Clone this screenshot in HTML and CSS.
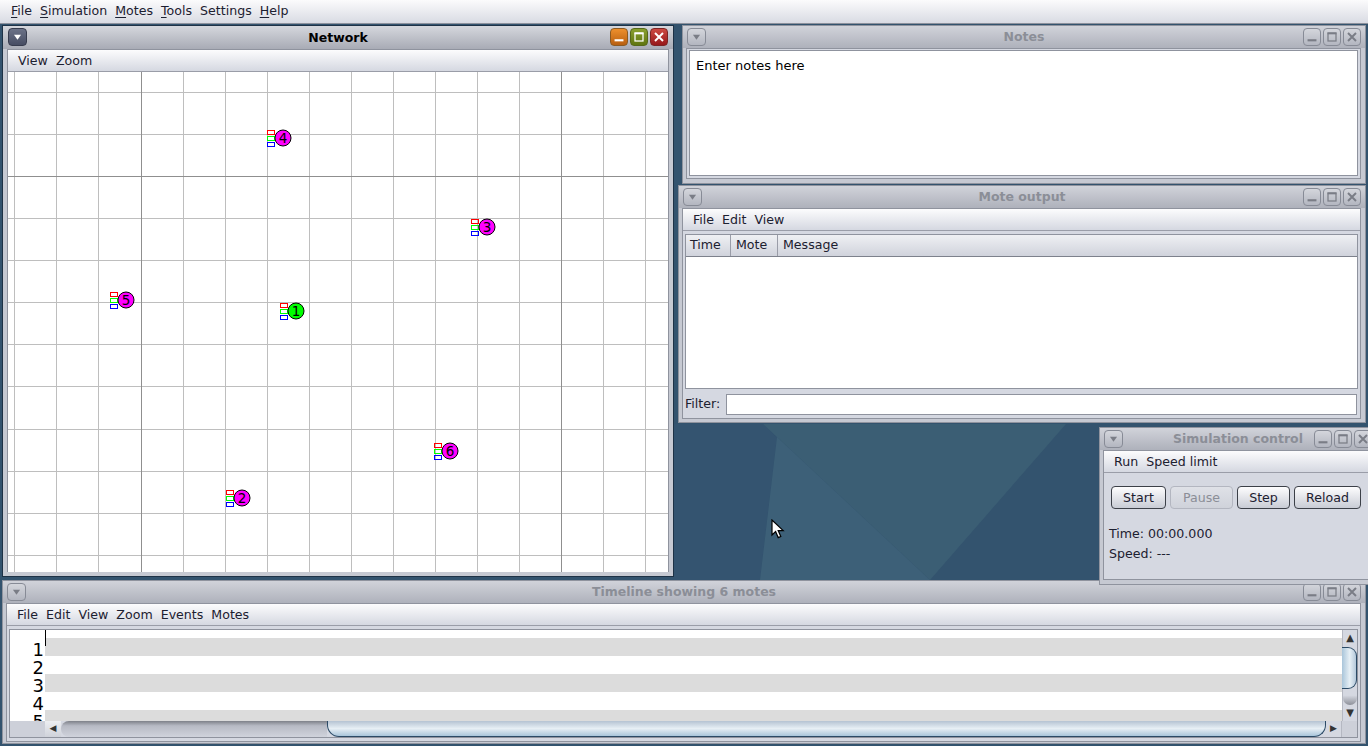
FILE: index.html
```html
<!DOCTYPE html>
<html lang="en">
<head>
<meta charset="utf-8">
<title>Cooja: The Contiki Network Simulator</title>
<link rel="stylesheet" href="styles.css">
</head>
<body>
<svg class="defs" width="0" height="0" aria-hidden="true">
  <symbol id="i-menu" viewBox="0 0 19 18"><path d="M5.5 6.5h8L9.5 12z" fill="currentColor"/></symbol>
  <symbol id="i-min" viewBox="0 0 18 18"><rect x="4" y="11.5" width="10" height="2.4" fill="currentColor"/></symbol>
  <symbol id="i-max" viewBox="0 0 18 18"><rect x="4.5" y="4.5" width="9" height="9" fill="none" stroke="currentColor" stroke-width="1.4"/><rect x="4" y="4" width="10" height="2" fill="currentColor"/></symbol>
  <symbol id="i-close" viewBox="0 0 18 18"><path d="M4.5 4.5l9 9M13.5 4.5l-9 9" fill="none" stroke="currentColor" stroke-width="2.2"/></symbol>
  <g id="leds">
    <rect x="-16" y="-8" width="7" height="4" fill="none" stroke="#f00"/>
    <rect x="-16" y="-2" width="7" height="4" fill="none" stroke="#0f0"/>
    <rect x="-16" y="4" width="7" height="4" fill="none" stroke="#00f"/>
  </g>
</svg>

<header class="appbar">
  <span class="mi"><u>F</u>ile</span><span class="mi"><u>S</u>imulation</span><span class="mi"><u>M</u>otes</span><span class="mi"><u>T</u>ools</span><span class="mi">Settings</span><span class="mi"><u>H</u>elp</span>
</header>

<main class="desktop">
  <svg class="wallpaper" width="1368" height="722" viewBox="0 24 1368 722" aria-hidden="true">
    <rect x="0" y="24" width="1368" height="722" fill="#33536e"/>
    <polygon points="674,424 763,424 777,437 760,580 674,580" fill="#345470"/>
    <polygon points="763,424 1066,424 930,580" fill="#3b5e74"/>
    <polygon points="777,437 930,580 760,580" fill="#3d6078"/>
  </svg>

  <section class="win w-timeline">
    <div class="title">
      <button class="tb menu"><svg><use href="#i-menu"/></svg></button>
      <h2>Timeline showing 6 motes</h2>
      <button class="tb"><svg><use href="#i-min"/></svg></button><button class="tb"><svg><use href="#i-max"/></svg></button><button class="tb"><svg><use href="#i-close"/></svg></button>
    </div>
    <div class="inner">
      <nav class="menubar"><span class="mi">File</span><span class="mi">Edit</span><span class="mi">View</span><span class="mi">Zoom</span><span class="mi">Events</span><span class="mi">Motes</span></nav>
      <div class="tl-frame">
        <div class="tl-view">
          <div class="tl-gutter"><span>1</span><span>2</span><span>3</span><span>4</span><span>5</span></div>
          <div class="tl-rows"><i class="tick"></i><div class="row"></div><div class="row"></div><div class="row"></div><div class="row"></div><div class="row"></div></div>
          <div class="vscroll">
            <span class="arrow">▲</span>
            <div class="vthumb"></div>
            <div class="vshadow"></div>
            <span class="arrow">▼</span>
          </div>
        </div>
        <div class="hscroll">
          <div class="hcorner"></div>
          <span class="harrow">◀</span>
          <div class="htrack"></div>
          <div class="hthumb"></div>
          <span class="harrow right">▶</span>
          <div class="hend"></div>
        </div>
      </div>
    </div>
  </section>

  <section class="win w-network active">
    <div class="title">
      <button class="tb menu"><svg><use href="#i-menu"/></svg></button>
      <h2>Network</h2>
      <button class="tb c-min"><svg><use href="#i-min"/></svg></button><button class="tb c-max"><svg><use href="#i-max"/></svg></button><button class="tb c-close"><svg><use href="#i-close"/></svg></button>
    </div>
    <div class="inner">
      <nav class="menubar"><span class="mi">View</span><span class="mi">Zoom</span></nav>
      <svg class="canvas" width="660" height="500" viewBox="8 72 660 500">
        <rect x="8" y="72" width="660" height="500" fill="#fff"/>
        <g class="grid">
          <path d="M14.5 72v500M56.5 72v500M98.5 72v500M183.5 72v500M225.5 72v500M267.5 72v500M309.5 72v500M351.5 72v500M393.5 72v500M435.5 72v500M477.5 72v500M519.5 72v500M603.5 72v500M645.5 72v500"/>
          <path d="M8 92.5h660M8 134.5h660M8 218.5h660M8 260.5h660M8 302.5h660M8 344.5h660M8 386.5h660M8 429.5h660M8 471.5h660M8 513.5h660M8 555.5h660"/>
          <path class="major" d="M141.5 72v500M561.5 72v500M8 176.5h660"/>
        </g>
        <g class="mote" transform="translate(283 138)"><use href="#leds" x="0.5" y="0.5"/><circle r="8" fill="#f0f"/><text y="5">4</text></g>
        <g class="mote" transform="translate(487 227)"><use href="#leds" x="0.5" y="0.5"/><circle r="8" fill="#f0f"/><text y="5">3</text></g>
        <g class="mote" transform="translate(126 300)"><use href="#leds" x="0.5" y="0.5"/><circle r="8" fill="#f0f"/><text y="5">5</text></g>
        <g class="mote" transform="translate(296 311)"><use href="#leds" x="0.5" y="0.5"/><circle r="8" fill="#0f0"/><text y="5">1</text></g>
        <g class="mote" transform="translate(450 451)"><use href="#leds" x="0.5" y="0.5"/><circle r="8" fill="#f0f"/><text y="5">6</text></g>
        <g class="mote" transform="translate(242 498)"><use href="#leds" x="0.5" y="0.5"/><circle r="8" fill="#f0f"/><text y="5">2</text></g>
      </svg>
    </div>
  </section>

  <section class="win w-notes">
    <div class="title">
      <button class="tb menu"><svg><use href="#i-menu"/></svg></button>
      <h2>Notes</h2>
      <button class="tb"><svg><use href="#i-min"/></svg></button><button class="tb"><svg><use href="#i-max"/></svg></button><button class="tb"><svg><use href="#i-close"/></svg></button>
    </div>
    <div class="inner pad-notes">
      <div class="notes">Enter notes here</div>
    </div>
  </section>

  <section class="win w-output">
    <div class="title">
      <button class="tb menu"><svg><use href="#i-menu"/></svg></button>
      <h2>Mote output</h2>
      <button class="tb"><svg><use href="#i-min"/></svg></button><button class="tb"><svg><use href="#i-max"/></svg></button><button class="tb"><svg><use href="#i-close"/></svg></button>
    </div>
    <div class="inner">
      <nav class="menubar"><span class="mi">File</span><span class="mi">Edit</span><span class="mi">View</span></nav>
      <div class="output-body">
        <div class="table">
          <div class="thead"><span class="th th-time">Time</span><span class="th th-mote">Mote</span><span class="th th-msg">Message</span></div>
          <div class="tbody"></div>
        </div>
        <div class="filter"><label>Filter:</label><div class="field"></div></div>
      </div>
    </div>
  </section>

  <section class="win w-sim">
    <div class="title">
      <button class="tb menu"><svg><use href="#i-menu"/></svg></button>
      <h2>Simulation control</h2>
      <button class="tb"><svg><use href="#i-min"/></svg></button><button class="tb"><svg><use href="#i-max"/></svg></button><button class="tb"><svg><use href="#i-close"/></svg></button>
    </div>
    <div class="inner">
      <nav class="menubar"><span class="mi">Run</span><span class="mi">Speed limit</span></nav>
      <div class="sim-body">
        <div class="btns">
          <button class="btn b-start">Start</button><button class="btn b-pause" disabled>Pause</button><button class="btn b-step">Step</button><button class="btn b-reload">Reload</button>
        </div>
        <p class="stat">Time: 00:00.000</p>
        <p class="stat">Speed: ---</p>
      </div>
    </div>
  </section>

  <svg class="cursor" width="14" height="21" viewBox="0 0 14 21" aria-hidden="true"><path d="M1 1v15l3.6-3.4 2.6 6 2.6-1.1-2.6-5.9h5z" fill="#fff" stroke="#000" stroke-width="1.2"/></svg>
</main>
</body>
</html>
```
FILE: styles.css
```css
* { box-sizing: border-box; }
html, body { margin: 0; padding: 0; width: 1368px; height: 746px; overflow: hidden; }
body { font: 12.6px/1 "DejaVu Sans", sans-serif; color: #1c2030; background: #33536e; }
.defs { position: absolute; }

.appbar {
  height: 24px; display: flex; align-items: center; padding: 0 0 0 7px; gap: 4px;
  background: linear-gradient(#fbfbfc, #d9dbe3);
  border-bottom: 1px solid #8d919c;
}
.appbar .mi { padding: 0 0 0 4px; }
.mi u { text-underline-offset: 2px; }

.desktop { position: relative; width: 1368px; height: 722px; overflow: hidden; }
.wallpaper { position: absolute; left: 0; top: 0; }
.cursor { position: absolute; left: 771px; top: 495px; }

.win {
  position: absolute; display: flex; flex-direction: column;
  background: #c6c9d2; border: 1px solid #8f939e; padding: 0 4px 4px 3px;
}
.win.active { border-color: #1e3246; padding: 0 4px 4px; }
.w-network  { left: 2px;    top: 1px;   width: 672px;  height: 552px; }
.w-notes    { left: 682px;  top: 1px;   width: 684px;  height: 159px; }
.w-output   { left: 678px;  top: 161px; width: 688px;  height: 238px; padding-bottom: 3px; }
.w-sim      { left: 1099px; top: 403px; width: 278px;  height: 158px; }
.w-timeline { left: 2px;    top: 556px; width: 1364px; height: 164px; padding-bottom: 1px; }

.title {
  height: 22px; flex: none; display: flex; align-items: center; margin: 0 -4px 0 -3px; padding: 0 4px;
  background: linear-gradient(#d1d3da, #aeb1bb);
}
.title h2 { flex: 1; margin: 0; padding: 0 0 2px 41px; text-align: center; font: bold 12.5px "DejaVu Sans", sans-serif; color: #8b8e97; }
.active .title { height: 23px; margin: 0 -4px; padding: 0 5px 1px; background: linear-gradient(#d5d7dd, #a8abb5); }
.active .title h2 { color: #000; padding-bottom: 0; }

.tb {
  width: 18px; height: 18px; padding: 0; margin: 0 0 0 2px; flex: none; display: block;
  border: 1px solid #878b96; border-radius: 4px; color: #7a7d86;
  background: linear-gradient(#d4d6dc, #b3b6c0);
}
.tb svg { display: block; width: 16px; height: 16px; }
.tb.menu { width: 19px; margin: 0; border-radius: 4px; }
.tb.menu svg { width: 17px; }
.active .tb.menu { background: linear-gradient(#6b7287, #474d63); border-color: #373c4e; color: #fff; }
.active .tb.c-min   { background: linear-gradient(#ed8f2c, #b85f10); border-color: #8b5a22; color: #fff; }
.active .tb.c-max   { background: linear-gradient(#8aa02e, #5f7510); border-color: #55681a; color: #fff; }
.active .tb.c-close { background: linear-gradient(#cd4a42, #97181a); border-color: #7c2424; color: #fff; }

.inner {
  flex: 1; min-height: 0; display: flex; flex-direction: column;
  border: 1px solid #8f939e; background: #d5d8e1;
}
.menubar {
  height: 22px; flex: none; display: flex; align-items: center; padding: 2px 0 0 10px; gap: 8px;
  background: linear-gradient(#fcfcfd, #d5d8e1);
  border-bottom: 1px solid #9a9da8;
}

.canvas { display: block; flex: none; }
.grid path { stroke: #bebebe; stroke-width: 1; fill: none; }
.grid .major { stroke: #8f8f8f; }
.mote circle { stroke: #000; stroke-width: 1; }
.mote text { font: 13.5px "DejaVu Sans", sans-serif; text-anchor: middle; fill: #000; }

.pad-notes { padding: 1px 2px 2px; }
.notes { flex: 1; background: #fff; border: 1px solid #8f939e; padding: 8px 6px; font-size: 13px; color: #000; }

.output-body { flex: 1; min-height: 0; display: flex; flex-direction: column; padding: 3px 2px 3px 2px; }
.table { flex: 1; min-height: 0; display: flex; flex-direction: column; border: 1px solid #8f939e; background: #fff; }
.thead { height: 22px; flex: none; display: flex; background: linear-gradient(#eff0f3, #d0d3dc); border-bottom: 1px solid #7d818c; }
.th { display: flex; align-items: center; padding-left: 5px; border-right: 1px solid #9a9da8; }
.th-time { width: 45px; padding-left: 4px; }
.th-mote { width: 47px; }
.th-msg { flex: 1; border-right: 0; }
.tbody { flex: 1; }
.filter { flex: none; height: 21px; margin-top: 5px; display: flex; align-items: center; }
.filter label { width: 41px; flex: none; }
.field { flex: 1; height: 21px; margin-right: 1px; background: #fff; border: 1px solid #8f939e; }

.sim-body { flex: 1; padding: 13px 0 0 5px; }
.btns { display: flex; gap: 4px; margin: 0 0 0 2px; }
.btn {
  height: 23px; padding: 0; font: 12.6px "DejaVu Sans", sans-serif; color: #1c2030;
  border: 1px solid #3c4048; border-radius: 4px;
  background: linear-gradient(#fdfdfe, #c9ccd5);
}
.btn:disabled { color: #8b8e97; border-color: #b3b6c0; background: linear-gradient(#dfe1e7, #cfd2da); }
.b-start { width: 55px; }
.b-pause { width: 63px; }
.b-step { width: 53px; }
.b-reload { width: 67px; }
.stat { margin: 0; height: 20px; line-height: 20px; }
.btns + .stat { margin-top: 15px; }

.tl-frame { flex: 1; min-height: 0; display: flex; flex-direction: column; margin: 3px 2px 3px; border: 1px solid #8f939e; background: #fff; }
.tl-view { flex: 1; min-height: 0; display: flex; overflow: hidden; }
.tl-gutter { width: 35px; flex: none; padding: 11px 1px 0 0; display: flex; flex-direction: column; align-items: flex-end; background: #fff; }
.tl-gutter span { height: 18px; line-height: 18px; font-size: 18px; color: #000; flex: none; }
.tl-rows { flex: 1; position: relative; padding-top: 8px; }
.tick { position: absolute; left: 0; top: 0; width: 1px; height: 16px; background: #000; }
.row { height: 18px; background: #fff; }
.row:nth-of-type(odd) { background: #dcdcdc; }
.vscroll { width: 15px; flex: none; display: flex; flex-direction: column; align-items: stretch; background: #d5d8e1; border-left: 1px solid #b5b8c2; }
.arrow { height: 16px; flex: none; font-size: 10px; line-height: 16px; text-align: center; color: #333; }
.vthumb {
  height: 42px; margin-left: -1px; margin-top: 1px; flex: none;
  border: 1px solid #2b4a66; border-left: 0; border-radius: 0 9px 9px 0;
  background: linear-gradient(90deg, #a9c5da, #e6eff5 55%, #b4c8da);
}
.vshadow { flex: 1; background: linear-gradient(#d5d8e1, #d5d8e1 40%, #8d9099); border-radius: 0 0 8px 8px; }

.hscroll { height: 16px; flex: none; display: flex; background: #d5d8e1; }
.hcorner { width: 35px; flex: none; background: #cdd0d9; }
.harrow { width: 16px; flex: none; font-size: 9px; line-height: 15px; text-align: center; color: #333; background: linear-gradient(#eceef1, #cfd2da); }
.harrow.right { background: #d5d8e1; border-right: 1px solid #b5b8c2; }
.htrack { width: 266px; flex: none; border-radius: 8px 0 0 8px; background: linear-gradient(#7e8189, #b7bac4 30%, #d0d3dc); }
.hthumb {
  flex: 1; border: 1px solid #2b4a66; border-top: 0; border-radius: 0 0 12px 12px;
  background: linear-gradient(#b5c3d3, #e7eff5 50%, #a9c5da);
}
.hend { width: 15px; flex: none; background: #cdd0d9; }
```
